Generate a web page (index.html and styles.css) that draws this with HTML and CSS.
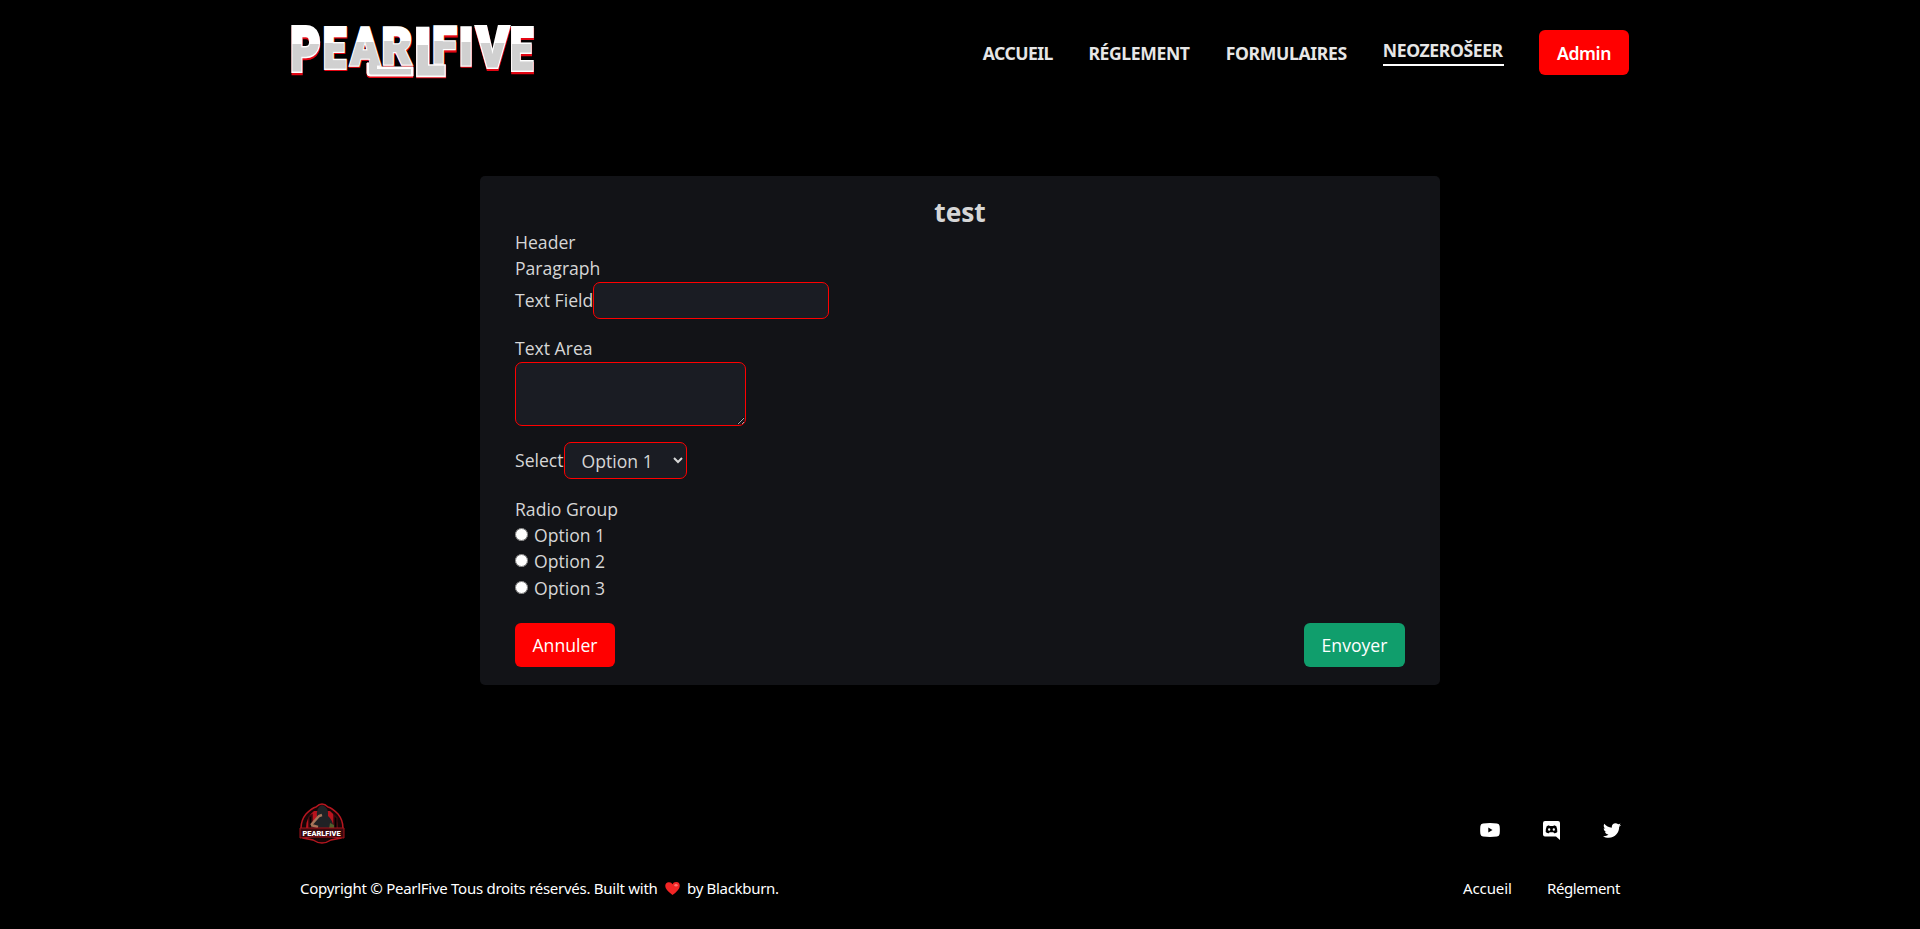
FILE: index.html
```html
<!DOCTYPE html>
<html lang="fr">
<head>
<meta charset="utf-8">
<title>PearlFive</title>
<link rel="stylesheet" href="styles.css">
</head>
<body>
<header class="header">
  <a class="brand" aria-label="PearlFive">
    <svg class="brand-logo" viewBox="0 0 246 56">
      <defs>
        <linearGradient id="steel" gradientUnits="userSpaceOnUse" x1="0" y1="-37" x2="0" y2="0">
          <stop offset="0.37" stop-color="#fff"/><stop offset="0.37" stop-color="#d0d0d0"/>
        </linearGradient>
        <g id="word">
          <text transform="translate(-.6 46) scale(.88 1.16)">P</text>
          <text transform="translate(32.3 42.5) scale(.78 1.06)">E</text>
          <text transform="translate(59.5 39.5) scale(.82 .98)">A</text>
          <text transform="translate(91 38.5) scale(.88 .96)">R</text>
          <text transform="translate(124 49.5) scale(1.06 1.25)">L</text>
          <text transform="translate(141.5 38) scale(.84 .95)">F</text>
          <text transform="translate(168 39.5) scale(.9 .98)">I</text>
          <text transform="translate(185.5 42) scale(.93 1.05)">V</text>
          <text transform="translate(219.3 45) scale(.78 1.13)">E</text>
        </g>
      </defs>
      <g class="word-shadow"><use href="#word" x="0.3" y="1.5"/><path d="M76 38h13v5h33v9.500H79q-3 0-3-3z"/></g>
      <g class="word-edge"><use href="#word"/><path d="M76 38h12v4h34v9H79q-3 0-3-3z"/></g>
      <g class="word-face"><use href="#word"/><path d="M78 35h8v9h34v5.500H80q-2 0-2-2z"/></g>
    </svg>
  </a>
  <nav class="nav">
    <a class="nav-link nav-home">ACCUEIL</a>
    <a class="nav-link nav-rules">RÉGLEMENT</a>
    <a class="nav-link nav-forms">FORMULAIRES</a>
    <a class="nav-link nav-user">NEOZEROŠEER</a>
    <a class="admin">Admin</a>
  </nav>
</header>
<main class="card">
  <h1 class="title">test</h1>
  <div class="line">Header</div>
  <div class="line para">Paragraph</div>
  <div class="field"><label>Text Field</label><input class="control text" type="text"></div>
  <div class="field stacked"><label class="line">Text Area</label><textarea class="control area"></textarea></div>
  <div class="field"><label class="select-label">Select</label><select class="control select"><option>Option 1</option><option>Option 2</option></select></div>
  <div class="line">Radio Group</div>
  <label class="line option"><input class="radio" type="radio" name="group">Option 1</label>
  <label class="line option"><input class="radio" type="radio" name="group"><span class="second">Option 2</span></label>
  <label class="line option"><input class="radio" type="radio" name="group">Option 3</label>
  <div class="actions"><button class="button cancel">Annuler</button><button class="button send">Envoyer</button></div>
</main>
<footer class="footer">
  <div class="footer-row footer-top">
    <svg class="badge" viewBox="0 0 46 44">
      <path d="M4 36Q-1 22 7 12Q13 6 17 5Q23-1 29 5Q33 6 39 12Q47 22 42 36L32 38Q23 44 14 38Z" fill="#160506" stroke="#b5161f" stroke-width="1.5"/>
      <path d="M7 26Q7 15 15 9H31Q39 15 39 26Z" fill="#b9131d"/>
      <path d="M10 27V15l3-2v14M35 27V13l3 3v10" stroke="#340a0e" stroke-width="1.5"/>
      <path d="M11 27Q16 17 18 15Q17 5 23 3Q30 5 29 14Q34 18 35 27Z" fill="#202225"/>
      <path d="M12 23l8-9 3-1M12 23l7 2" stroke="#a87559" stroke-width="2.5" fill="none"/>
      <path d="M31 21l4 2v4h-5z" fill="#50602b"/>
      <path d="M1 26H45V36L32 35H14L1 36Z" fill="#3b090d" stroke="#a4121a"/>
      <text x="3.5" y="34" textLength="38" lengthAdjust="spacingAndGlyphs">PEARLFIVE</text>
    </svg>
    <div class="social">
      <svg class="icon youtube" viewBox="0 0 20 14"><path fill="#fff" fill-rule="evenodd" d="M3 .4Q10-.3 17 .4Q19.4.7 19.6 3Q20.1 7 19.6 11Q19.3 13.3 17 13.6Q10 14.3 3 13.6Q.7 13.3.4 11Q-.1 7 .4 3Q.6.7 3 .4ZM8.3 4.5v5l4.2-2.5Z"/></svg>
      <svg class="icon discord" viewBox="0 0 17 19"><path fill="#fff" fill-rule="evenodd" d="M2 0h13q2 0 2 2v17l-4-3.5H2q-2 0-2-2V2q0-2 2-2ZM6 4.2Q4.5 4.5 3.7 5.2Q2.5 8 2.7 11Q4 12.4 5.9 12.3L6.6 11.3H10.4L11.1 12.3Q13 12.4 14.3 11Q14.5 8 13.3 5.2Q12.4 4.5 11 4.2L10.4 5H6.6ZM6.2 7.2a1.15 1.25 0 1 1 0 2.5a1.15 1.25 0 1 1 0-2.5ZM10.8 7.2a1.15 1.25 0 1 1 0 2.5a1.15 1.25 0 1 1 0-2.5Z"/></svg>
      <svg class="icon twitter" viewBox="0 48 512 416"><path fill="#fff" d="M459.37 151.716c.325 4.548.325 9.097.325 13.645 0 138.72-105.583 298.558-298.558 298.558-59.452 0-114.68-17.219-161.137-47.106 8.447.974 16.568 1.299 25.34 1.299 49.055 0 94.213-16.568 130.274-44.832-46.132-.975-84.792-31.188-98.112-72.772 6.498.974 12.995 1.624 19.818 1.624 9.421 0 18.843-1.3 27.614-3.573-48.081-9.747-84.143-51.98-84.143-102.985v-1.299c13.969 7.797 30.214 12.67 47.431 13.319-28.264-18.843-46.781-51.005-46.781-87.391 0-19.492 5.197-37.36 14.294-52.954 51.655 63.675 129.3 105.258 216.365 109.807-1.624-7.797-2.599-15.918-2.599-24.04 0-57.828 46.782-104.934 104.934-104.934 30.213 0 57.502 12.67 76.67 33.137 23.715-4.548 46.456-13.32 66.599-25.34-7.798 24.366-24.366 44.833-46.132 57.827 21.117-2.273 41.584-8.122 60.426-16.243-14.292 20.791-32.161 39.308-52.628 54.253z"/></svg>
    </div>
  </div>
  <div class="footer-row footer-bottom">
    <p class="copyright"><span class="copy-main">Copyright © PearlFive Tous droits réservés. Built with</span><svg class="heart" viewBox="0 0 16 14"><path fill="#f22525" d="M8 14Q0 8 .2 4Q.5 0 4.3.2Q7 .3 8 2.5Q9-.1 12.3.1Q16 .5 15.8 4.5Q15.5 8.5 8 14Z"/><ellipse cx="11.8" cy="3.5" rx="1.8" ry="1.4" fill="#ff7470"/></svg><span class="copy-author">by Blackburn.</span></p>
    <div class="footer-links"><a class="foot-home">Accueil</a><a class="foot-rules">Réglement</a></div>
  </div>
</footer>
</body>
</html>
```

FILE: styles.css
```css
* { box-sizing: border-box; }
body { margin: 0; background: #000; color: #d6d6d6; font: 17.6px/26.4px "Open Sans", sans-serif; height: 929px; overflow: hidden; }
.header { height: 176px; padding: 25px 291px 0; display: flex; justify-content: space-between; align-items: flex-start; }
.brand-logo { display: block; width: 246px; height: 56px; }
.brand-logo text { font-family: Roboto, sans-serif; font-weight: 900; font-size: 52px; }
.word-shadow { fill: #e30613; stroke: #e30613; stroke-width: 3.8px; }
.word-shadow path, .word-edge path { stroke-width: 1px; }
.word-edge { fill: #fff; stroke: #fff; stroke-width: 3.6px; }
.word-face { fill: url(#steel); stroke: url(#steel); stroke-width: 1px; }
.word-face path { fill: #d0d0d0; stroke: none; }
.nav { display: flex; align-items: center; gap: 35.2px; height: 45px; margin-top: 5px; font-family: "Noto Sans", sans-serif; font-weight: 700; color: #e6e6e6; }
.nav-link { white-space: nowrap; padding-top: 1px; }
.nav-home { width: 70.5px; letter-spacing: -.55px; }
.nav-rules { width: 102px; letter-spacing: -.4px; }
.nav-forms { width: 122px; letter-spacing: -.33px; }
.nav-user { width: 121px; letter-spacing: -.4px; border-bottom: 2px solid #fff; margin-bottom: 2px; padding-top: 0; }
.admin { width: 90px; height: 45px; border-radius: 6px; background: #f00; color: #fff; line-height: 46px; text-align: center; font-weight: 600; letter-spacing: -.4px; }
.card { width: 960px; height: 509px; margin: 0 auto; padding: 18px 35px; background: #121317; border-radius: 5px; }
.title { margin: 0; height: 35.2px; font-size: 26.4px; line-height: 36px; font-weight: 700; text-align: center; }
.line { display: block; height: 26.4px; line-height: 26px; }
.para { line-height: 25px; }
.field { display: flex; align-items: center; margin-bottom: 16.5px; }
.stacked { display: block; }
.select-label { padding-bottom: 1px; }
.control { background: #1a1c23; border: 1px solid #f00; border-radius: 7px; color: inherit; font: inherit; margin: 0; }
.text { width: 236px; height: 37px; }
.area { display: block; width: 231px; height: 64px; }
.select { width: 123px; height: 37px; padding: 0 2px 0 13px; }
.option { display: flex; align-items: center; }
.second { padding-bottom: 1.5px; }
.radio { width: 13px; height: 13px; margin: 0 6px 2px 0; }
.actions { display: flex; justify-content: space-between; margin-top: 22px; }
.button { width: 100px; height: 44px; padding: 0; border: 0; border-radius: 6px; color: #fff; font: inherit; }
.cancel { background: #f00; }
.send { background: #109e6c; width: 101px; }
.footer { padding: 117px 299px 0; color: #fff; font-family: "Noto Sans", sans-serif; font-size: 15px; }
.footer-row { display: flex; justify-content: space-between; }
.badge { width: 46px; height: 44px; }
.badge text { font: 900 8px Roboto, sans-serif; fill: #fff; }
.social { display: flex; align-items: center; height: 56px; padding-right: .5px; }
.icon { display: block; }
.youtube { width: 20px; height: 14px; margin-right: 43px; }
.discord { width: 17px; height: 19px; margin-right: 43px; }
.twitter { width: 18px; height: 15px; }
.footer-bottom { margin-top: 16px; padding: 0 1px; }
.copyright { display: flex; align-items: center; margin: 0; white-space: nowrap; }
.copy-main { width: 357px; letter-spacing: -.27px; }
.heart { width: 15px; height: 13px; margin: 1px 7px 0 8px; }
.copy-author { letter-spacing: -.3px; }
.footer-links { display: flex; gap: 35px; margin-top: 1px; }
.foot-home { width: 49px; letter-spacing: -.1px; }
.foot-rules { width: 73px; letter-spacing: -.4px; }
```
